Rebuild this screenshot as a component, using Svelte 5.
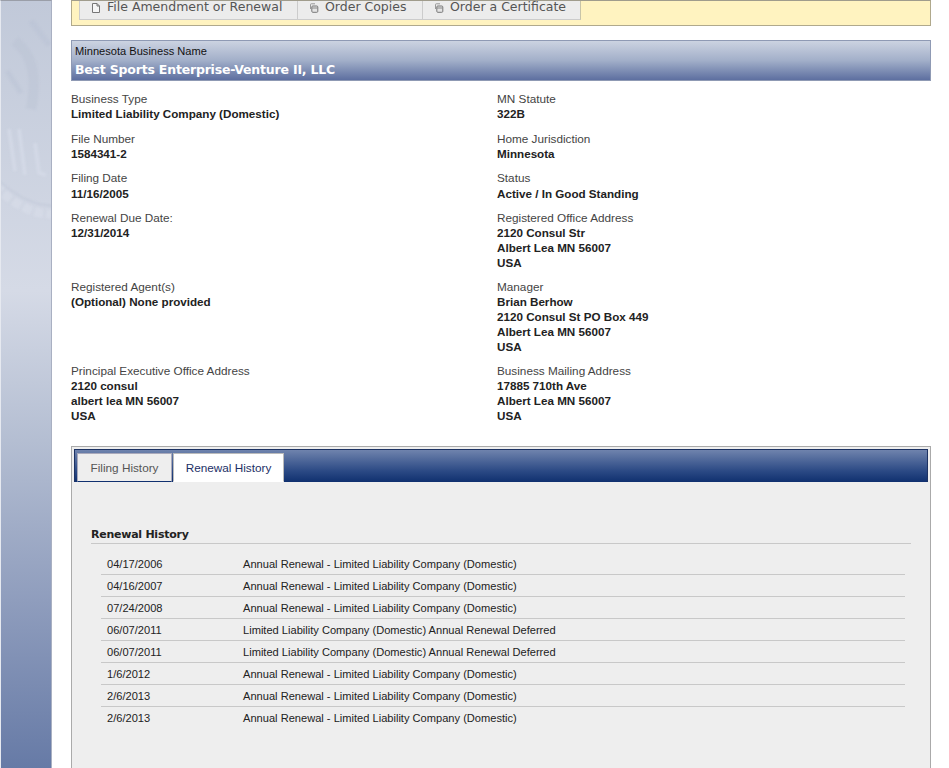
<script>
  const info = [
    [{ l: 'Business Type', v: ['Limited Liability Company (Domestic)'] }, { l: 'MN Statute', v: ['322B'] }],
    [{ l: 'File Number', v: ['1584341-2'] }, { l: 'Home Jurisdiction', v: ['Minnesota'] }],
    [{ l: 'Filing Date', v: ['11/16/2005'] }, { l: 'Status', v: ['Active / In Good Standing'] }],
    [{ l: 'Renewal Due Date:', v: ['12/31/2014'] }, { l: 'Registered Office Address', v: ['2120 Consul Str', 'Albert Lea MN 56007', 'USA'] }],
    [{ l: 'Registered Agent(s)', v: ['(Optional) None provided'] }, { l: 'Manager', v: ['Brian Berhow', '2120 Consul St PO Box 449', 'Albert Lea MN 56007', 'USA'] }],
    [{ l: 'Principal Executive Office Address', v: ['2120 consul', 'albert lea MN 56007', 'USA'] }, { l: 'Business Mailing Address', v: ['17885 710th Ave', 'Albert Lea MN 56007', 'USA'] }]
  ];
  const ann = 'Annual Renewal - Limited Liability Company (Domestic)';
  const def = 'Limited Liability Company (Domestic) Annual Renewal Deferred';
  const rows = [
    ['04/17/2006', ann], ['04/16/2007', ann], ['07/24/2008', ann], ['06/07/2011', def],
    ['06/07/2011', def], ['1/6/2012', ann], ['2/6/2013', ann], ['2/6/2013', ann]
  ];
</script>

{#snippet copies()}
  <svg class="ico" viewBox="0 0 10 10" width="10" height="10" aria-hidden="true">
    <path d="M1.5 6V1.5Q1.5 .8 2.2 .8H6" fill="none" stroke="#999" />
    <rect x="2.8" y="3" width="6" height="6.3" rx="1" fill="#e4e4e4" stroke="#777" />
    <path d="M3 5H8.5" stroke="#888" />
  </svg>
{/snippet}

<div class="page">
  <aside class="side">
    <svg class="seal" viewBox="0 0 52 240" width="52" height="240" aria-hidden="true">
      <g fill="none">
        <path d="M-6 184 Q22 214 52 213" stroke="#d9dee9" stroke-width="9" opacity=".6" stroke-dasharray="9 3" />
        <path d="M-6 176 Q22 204 52 205" stroke="#b4bccf" stroke-width="1" opacity=".6" />
        <path d="M8 128 L14 170 M18 128 L24 174 M34 142 L38 172 L45 174" stroke="#d6dce8" stroke-width="4" opacity=".7" />
        <path d="M14 40 Q40 60 30 108" stroke="#b7bfd1" stroke-width="10" opacity=".35" />
        <path d="M30 20 L48 44 M6 70 L20 92" stroke="#b4bccf" stroke-width="5" opacity=".3" />
      </g>
    </svg>
  </aside>
  <main class="main">
    <div class="notice">
      <nav class="actions">
        <span class="action">
          <svg class="ico" viewBox="0 0 10 10" width="10" height="10" aria-hidden="true">
            <path d="M1.5 .5H6L8.5 3V9.5H1.5Z M6 .5V3H8.5" fill="#f6f6f6" stroke="#777" />
          </svg>
          File Amendment or Renewal
        </span>
        <span class="action">{@render copies()}Order Copies</span>
        <span class="action">{@render copies()}Order a Certificate</span>
      </nav>
    </div>

    <header class="name">
      <div class="name-label">Minnesota Business Name</div>
      <div class="name-value">Best Sports Enterprise-Venture II, LLC</div>
    </header>

    <section class="info">
      {#each info as row}
        {#each row as f}
          <div class="field">
            <div class="label">{f.l}</div>
            {#each f.v as line}<div class="value">{line}</div>{/each}
          </div>
        {/each}
      {/each}
    </section>

    <section class="panel">
      <div class="tabbar">
        <span class="tab">Filing History</span>
        <span class="tab active">Renewal History</span>
      </div>
      <div class="panel-body">
        <h2>Renewal History</h2>
        <div class="rows">
          {#each rows as r}
            <div class="row"><span class="date">{r[0]}</span><span>{r[1]}</span></div>
          {/each}
        </div>
      </div>
    </section>
  </main>
</div>

<style>
  :global(body) { margin: 0; background: #fff; }
  .page {
    display: flex;
    height: 768px;
    overflow: hidden;
    font-family: "Liberation Sans", Arial, sans-serif;
    font-size: 11.75px;
    color: #222;
  }
  .side {
    position: relative;
    box-sizing: border-box;
    flex: 0 0 52px;
    border-right: 1px solid #a9b0c2;
    border-left: 1px solid #e6e9f0;
    border-top: 1px solid #9a9ea8;
    background: linear-gradient(#c1c9d9 0, #d5dae6 290px, #b4bed2 440px, #8f9dbd 600px, #667aa6 768px);
    overflow: hidden;
  }
  .seal { position: absolute; left: 0; top: 0; filter: blur(1.2px); }
  .main { width: 860px; margin-left: 19px; }
  .notice {
    box-sizing: border-box;
    height: 26px;
    background: #fff3c0;
    border: 1px solid #b0a98c;
    border-top-color: #a09c8c;
    padding-left: 7px;
  }
  .actions { display: flex; width: max-content; height: 18px; background: #ececec; border: 1px solid #ccc; border-top: 0; border-right-color: #c8c4a8; }
  .action {
    display: flex;
    align-items: center;
    gap: 6px;
    box-sizing: border-box;
    padding: 0 0 6px 11px;
    font-family: "DejaVu Sans", sans-serif;
    font-size: 12.5px;
    color: #555;
    border-left: 1px solid #ccc;
    line-height: 14px;
    white-space: nowrap;
  }
  .action:first-child { border-left: 0; width: 217px; padding-left: 11px; }
  .action:nth-child(2) { width: 125px; }
  .action:nth-child(3) { width: 158px; }
  .ico { flex: none; margin-top: 2px; }
  .name {
    box-sizing: border-box;
    height: 41px;
    margin-top: 14px;
    border: 1px solid #8f9ab4;
    background: linear-gradient(#ccd3e1, #a2afc9 50%, #5d6fa0);
    padding: 3px 3px 0;
  }
  .name-label { font-size: 11.1px; line-height: 14px; color: #111; }
  .name-value {
    margin-top: 4px;
    font-family: "DejaVu Sans", sans-serif;
    font-weight: bold;
    font-size: 12.5px;
    letter-spacing: -0.2px;
    line-height: 16px;
    color: #fff;
  }
  .info {
    display: grid;
    grid-template-columns: 426px 1fr;
    margin-top: 10px;
    row-gap: 8.7px;
  }
  .label { color: #444; line-height: 15px; margin-bottom: 1.3px; }
  .value { font-weight: bold; line-height: 14.7px; color: #222; font-size: 11.65px; }
  .panel {
    box-sizing: border-box;
    height: 340px;
    margin-top: 22.7px;
    border: 1px solid #aaa;
    background: #eee;
    padding: 2px;
  }
  .tabbar {
    box-sizing: border-box;
    display: flex;
    align-items: flex-end;
    gap: 1px;
    height: 33px;
    padding-left: 2px;
    background: linear-gradient(#6f83ad, #2c4a85 65%, #10306f);
    border: 1px solid #1d3263;
    border-bottom: 0;
  }
  .tab {
    box-sizing: border-box;
    height: 29px;
    display: flex;
    align-items: center;
    justify-content: center;
    width: 95px;
    background: #eee;
    color: #555;
    border: 1px solid #aab;
    border-bottom: 1px solid #10306f;
  }
  .tab.active {
    width: 111px;
    background: #fff;
    color: #1b2f66;
    border-color: #bbb;
    border-bottom-color: #fff;
  }
  .panel-body { padding: 44px 17px 0; }
  h2 {
    margin: 0;
    box-sizing: border-box;
    height: 18px;
    font-family: "DejaVu Sans", sans-serif;
    font-size: 11px;
    letter-spacing: -0.25px;
    line-height: 18px;
    font-weight: bold;
    color: #222;
    border-bottom: 1px solid #c8c8c8;
  }
  .rows { margin: 9px 6px 0 10px; }
  .row {
    box-sizing: border-box;
    display: flex;
    height: 22px;
    padding: 4px 0 0 6px;
    line-height: 14px;
    font-size: 11.1px;
    color: #222;
    border-bottom: 1px solid #c8c8c8;
  }
  .row:last-child { border-bottom: 0; }
  .date { width: 136px; }
</style>
